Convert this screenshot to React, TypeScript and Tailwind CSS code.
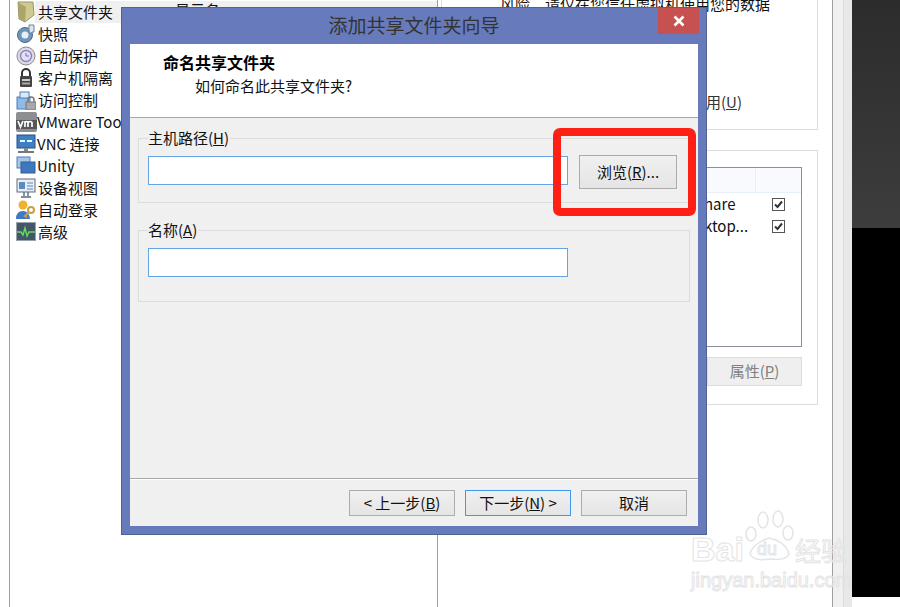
const font = { fontFamily: '"Noto Sans CJK SC", "Liberation Sans", sans-serif' }

const FolderIcon = () => (
  <svg width="20" height="22" viewBox="0 0 20 22">
    <path d="M2 1 L17 1 L18 14 L9 21 L3 18 Z" fill="#cfc992" stroke="#9a9563" />
    <path d="M3 2 L10 6 L9 21 L3 18 Z" fill="#aaa66a" />
  </svg>
)
const SnapIcon = () => (
  <svg width="20" height="20" viewBox="0 0 20 20">
    <circle cx="9" cy="11" r="7.5" fill="#6f96b8" stroke="#4a6a88" />
    <circle cx="9" cy="11" r="3.5" fill="#e8f0f6" />
    <path d="M13 1 h5 v7 h-2 l-1 2 -2 -3 Z" fill="#dce6ee" stroke="#6d8296" />
  </svg>
)
const ProtectIcon = () => (
  <svg width="20" height="20" viewBox="0 0 20 20">
    <circle cx="10" cy="10" r="9" fill="#dcdce2" stroke="#8a8a92" />
    <circle cx="10" cy="10" r="5.5" fill="#e4dff2" stroke="#8f80c8" strokeWidth="1.4" />
    <path d="M10 7 v3 h3" stroke="#7d6db8" fill="none" />
  </svg>
)
const LockIcon = () => (
  <svg width="20" height="20" viewBox="0 0 20 20">
    <path d="M6 8 V5 a4 4 0 0 1 8 0 V8" fill="none" stroke="#333" strokeWidth="2" />
    <rect x="4" y="8" width="12" height="11" rx="1" fill="#444" />
    <rect x="6" y="11" width="8" height="2" fill="#ccc" />
    <rect x="6" y="14.5" width="8" height="2" fill="#aaa" />
  </svg>
)
const AccessIcon = () => (
  <svg width="20" height="20" viewBox="0 0 20 20">
    <rect x="1" y="7" width="13" height="12" fill="#8fbbe6" stroke="#4a7fb8" />
    <rect x="4" y="2" width="9" height="6" fill="#dcebf8" stroke="#4a7fb8" />
    <path d="M12 13 v-3 a3 3 0 0 1 6 0 v3" fill="none" stroke="#777" strokeWidth="1.5" />
    <rect x="10" y="12" width="10" height="8" fill="#a8a8a8" stroke="#777" />
  </svg>
)
const VmIcon = () => (
  <svg width="21" height="20" viewBox="0 0 21 20">
    <rect x="0" y="0" width="21" height="20" rx="2" fill="#8c8e91" />
    <rect x="0" y="8" width="21" height="9" fill="#56585b" />
    <path d="M2 9 l2.5 6 2.5-6 M9 15 v-6 M9 10.5 q2-2 3 0 v4.5 M12 10.5 q2.5-2 4 0 v4.5" stroke="#fff" strokeWidth="1.7" fill="none" />
  </svg>
)
const VncIcon = () => (
  <svg width="20" height="20" viewBox="0 0 20 20">
    <rect x="1" y="1" width="18" height="13" fill="#3f7fc4" stroke="#2b4f80" />
    <rect x="4" y="6" width="5" height="2" fill="#dff" />
    <rect x="11" y="6" width="5" height="2" fill="#dff" />
    <rect x="8" y="14" width="4" height="3" fill="#8a8a8a" />
    <rect x="2" y="17" width="16" height="2" fill="#777" />
  </svg>
)
const UnityIcon = () => (
  <svg width="20" height="20" viewBox="0 0 20 20">
    <rect x="1" y="1" width="13" height="11" fill="#a7c6e6" stroke="#4a7fb8" />
    <rect x="5" y="6" width="14" height="11" fill="#3f78bc" stroke="#2f5f98" />
  </svg>
)
const DeviceIcon = () => (
  <svg width="20" height="20" viewBox="0 0 20 20">
    <rect x="1" y="1" width="18" height="13" fill="#e8eef4" stroke="#5a6a7a" />
    <rect x="3" y="4" width="6" height="7" fill="#5b8ac0" />
    <path d="M11 5 h6 M11 8 h6 M11 11 h6" stroke="#5b8ac0" />
    <path d="M8 14 v4 M12 14 v4 M5 19 h10" stroke="#5a6a7a" strokeWidth="1.4" />
  </svg>
)
const LoginIcon = () => (
  <svg width="20" height="20" viewBox="0 0 20 20">
    <circle cx="7" cy="5" r="4.5" fill="#f0b030" />
    <path d="M0 19 q0-8 7-8 q6 0 7 8 Z" fill="#3f78c8" />
    <circle cx="15" cy="10" r="3" fill="none" stroke="#c8a040" strokeWidth="2" />
    <path d="M13 12 l-4 4 2 1" stroke="#c8a040" strokeWidth="2" fill="none" />
  </svg>
)
const AdvancedIcon = () => (
  <svg width="20" height="20" viewBox="0 0 20 20">
    <rect x="0.5" y="0.5" width="19" height="18" fill="#44566a" stroke="#9aa2aa" />
    <path d="M1 10 h4 l2 3 2-7 2 8 2-4 h6" stroke="#5fe05f" strokeWidth="1.4" fill="none" />
  </svg>
)

const navItems = [
  { icon: <FolderIcon />, label: '共享文件夹', active: true },
  { icon: <SnapIcon />, label: '快照' },
  { icon: <ProtectIcon />, label: '自动保护' },
  { icon: <LockIcon />, label: '客户机隔离' },
  { icon: <AccessIcon />, label: '访问控制' },
  { icon: <VmIcon />, label: 'VMware Tools', tight: true },
  { icon: <VncIcon />, label: 'VNC 连接', tight: true },
  { icon: <UnityIcon />, label: 'Unity', tight: true },
  { icon: <DeviceIcon />, label: '设备视图' },
  { icon: <LoginIcon />, label: '自动登录' },
  { icon: <AdvancedIcon />, label: '高级' },
]

const Check = () => (
  <span className="flex h-[13px] w-[13px] items-center justify-center border border-[#555] bg-white">
    <svg width="9" height="9" viewBox="0 0 9 9">
      <path d="M1 4.5 L3.5 7 L8 1.5" stroke="#333" strokeWidth="2" fill="none" />
    </svg>
  </span>
)

const WizardButton = ({ children, focused, className }: { children: React.ReactNode; focused?: boolean; className?: string }) => (
  <div
    className={
      'flex h-[26px] items-center justify-center border bg-gradient-to-b from-[#f0f0f0] to-[#e5e5e5] text-[15px] text-[#111] ' +
      (focused ? 'border-[#3c9bf0] ' : 'border-[#acacac] ') +
      (className ?? 'w-[106px]')
    }
  >
    {children}
  </div>
)

const PathGroup = ({ title, label, height, className }: { title: string; label: string; height: string; className?: string }) => (
  <div className={'relative border border-[#dcdcdc] ' + height + ' ' + (className ?? '')}>
    <span className="absolute left-[9px] top-[-10px] bg-[#f0f0f0] pr-[1px] text-[15px] leading-[18px] text-[#111]">
      {title}(<u>{label}</u>)
    </span>
    <div className="ml-[9px] mt-[17px] h-[29px] w-[420px] border border-[#64a5e6] bg-white" />
  </div>
)

export default function App() {
  return (
    <div className="relative flex h-[607px] w-[900px] overflow-hidden bg-white" style={font}>
      {/* settings window behind the wizard */}
      <div className="relative ml-[9px] flex h-full w-[429px] flex-col border-x border-[#a0a0a0]">
        <div className="ml-[25px] mt-[1px] h-[22px] bg-[#f0f0f0] pl-[140px] text-[15px] leading-[18px] text-[#111]">显示名</div>
        <div className="-mt-[22px] flex flex-col pl-[5px]">
          {navItems.map((item) => (
            <div key={item.label} className="flex h-[22px] items-center whitespace-nowrap text-[15px] text-[#111]">
              <span className={'flex w-[22px] justify-center ' + (item.tight ? '' : 'mr-[1px]')}>{item.icon}</span>
              <span className="leading-[22px]">{item.label}</span>
            </div>
          ))}
        </div>
      </div>

      <div className="flex h-full w-[394px] flex-col pl-[3px] pr-[14px]">
        <div className="h-[130px] border border-t-0 border-[#dcdcdc] pl-[58px]">
          <div className="-mt-[5px] whitespace-nowrap text-[15px] leading-[18px] text-[#111]">风险。请仅在您信任虚拟机使用您的数据</div>
          <div className="mt-[80px] pl-[206px] text-[15px] leading-[18px] text-[#333]">
            用(<u>U</u>)
          </div>
        </div>
        <div className="mt-[20px] h-[255px] border border-[#dcdcdc] pl-[16px] pr-[15px] pt-[16px]">
          <div className="ml-[60px] h-[180px] border border-[#8a8f99]">
            <div className="flex h-[25px] justify-end border-b border-[#e6effa] bg-[#f8fafd]">
              <div className="w-[46px] border-l border-[#e6effa]" />
            </div>
            <div className="flex h-[22px] items-center justify-between pl-[185px] pr-[16px] text-[15px] text-[#111]">
              <span>hare</span>
              <Check />
            </div>
            <div className="flex h-[22px] items-center justify-between pl-[185px] pr-[16px] text-[15px] text-[#111]">
              <span>ktop...</span>
              <Check />
            </div>
          </div>
          <div className="ml-auto mt-[10px] flex h-[29px] w-[95px] items-center justify-center border border-[#dcdcdc] bg-[#efefef] text-[15px] text-[#808080]">
            属性(<u>P</u>)
          </div>
        </div>
      </div>

      <div className="flex h-full w-[20px] border-l border-[#a0a0a0] bg-[#f0f0f0]">
        <div className="ml-[10px] h-full w-[9px] border-l border-[#dcdcdc] bg-[#e8e8e8]" />
      </div>
      <div className="flex h-full flex-1 flex-col">
        <div className="h-[228px] bg-gradient-to-b from-[#2c2c2c] to-[#3d3d3d]" />
        <div className="h-[369px] bg-black" />
      </div>

      {/* wizard dialog */}
      <div className="absolute left-[121px] top-[7px] flex h-[528px] w-[586px] flex-col border border-[#4f6296] bg-[#667abc] px-[8px] pb-[8px]">
        <div className="relative flex h-[36px] items-center justify-center text-[19px] text-[#333]">
          <span className="mt-[-2px]">添加共享文件夹向导</span>
          <div className="absolute right-[-1px] top-0 flex h-[26px] w-[41px] items-center justify-center bg-[#c75050]">
            <svg width="12" height="12" viewBox="0 0 12 12">
              <path d="M1.5 1.5 L10.5 10.5 M10.5 1.5 L1.5 10.5" stroke="#fff" strokeWidth="2.6" />
            </svg>
          </div>
        </div>
        <div className="flex flex-1 flex-col bg-[#f0f0f0]">
          <div className="h-[74px] border-b border-[#a8a8a8] bg-white pl-[33px] pt-[6px] leading-[24px] text-[#111]">
            <div className="text-[16px] font-bold text-black">命名共享文件夹</div>
            <div className="pl-[32px] text-[15px]">如何命名此共享文件夹?</div>
          </div>
          <div className="flex h-[361px] flex-col border-b border-[#a8a8a8] px-[8px] pt-[20px]">
            <PathGroup title="主机路径" label="H" height="h-[65px]" />
            <PathGroup title="名称" label="A" height="h-[72px]" className="mt-[27px]" />
          </div>
          <div className="flex flex-1 items-start justify-end gap-[10px] border-t border-white pr-[11px] pt-[10px]">
            <WizardButton>
              &lt; 上一步(<u>B</u>)
            </WizardButton>
            <WizardButton focused>
              下一步(<u>N</u>) &gt;
            </WizardButton>
            <WizardButton>取消</WizardButton>
          </div>
        </div>
      </div>

      {/* browse button and red annotation */}
      <div className="absolute left-[553px] top-[128px] h-[88px] w-[143px] rounded-[7px] border-[8px] border-[#ff2015] pl-[18px] pt-[19px]">
        <WizardButton className="h-[34px] w-[98px]">
          浏览(<u>R</u>)...
        </WizardButton>
      </div>

      {/* baidu watermark */}
      <div className="absolute left-[691px] top-[508px] h-[84px] w-[162px] text-transparent [-webkit-text-stroke:1px_#e4e4e4]">
        <svg className="absolute left-[53px] top-[2px]" width="50" height="52" viewBox="0 0 50 52" fill="none" stroke="#e4e4e4" strokeWidth="1.5">
          <ellipse cx="7" cy="24" rx="5" ry="7" />
          <ellipse cx="19" cy="10" rx="5" ry="8" />
          <ellipse cx="34" cy="9" rx="5" ry="8" />
          <ellipse cx="44" cy="23" rx="5" ry="7" />
          <path d="M6 44 Q8 34 25 28 Q42 32 45 44 Q42 51 26 49 Q10 52 6 44 Z" />
        </svg>
        <div className="flex h-[58px] items-end">
          <span className="w-[104px] text-[34px] font-bold leading-[34px]" style={{ fontFamily: '"Liberation Sans", sans-serif' }}>Bai</span>
          <span className="text-[26px] leading-[32px]">经验</span>
        </div>
        <span className="absolute left-[66px] top-[31px] text-[18px] leading-[20px]" style={{ fontFamily: '"Liberation Sans", sans-serif' }}>du</span>
        <div className="mt-[2px] whitespace-nowrap text-[20px] leading-[24px]" style={{ fontFamily: '"Liberation Sans", sans-serif' }}>
          jingyan.baidu.com
        </div>
      </div>
    </div>
  )
}
